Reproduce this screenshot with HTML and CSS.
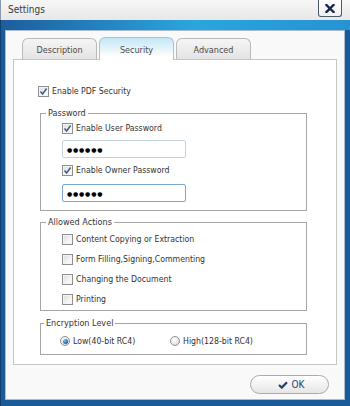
FILE: index.html
```html
<!DOCTYPE html>
<html>
<head>
  <title>Settings</title>
  <link rel="stylesheet" href="styles.css">
</head>
<body>
  <div class="window">
    <div class="titlebar">
      <span class="title">Settings</span>
      <button class="close">
        <svg width="10" height="9" viewBox="0 0 10 9"><path d="M1.5 1 L8.5 8 M8.5 1 L1.5 8" stroke="#15294a" stroke-width="2.4" stroke-linecap="square"/></svg>
      </button>
    </div>
    <div class="frame">
      <div class="dialog">
        <div class="tabs">
          <div class="tab">Description</div>
          <div class="tab active">Security</div>
          <div class="tab">Advanced</div>
        </div>
        <div class="panel">
          <label class="row top-row"><span class="box checked"><svg width="9" height="9" viewBox="0 0 9 9"><path d="M1.5 4.5 L3.6 7 L7.6 1.5" fill="none" stroke="#3d5a8c" stroke-width="1.5"/></svg></span>Enable PDF Security</label>

          <fieldset class="group password">
            <legend>Password</legend>
            <label class="row first-row"><span class="box checked"><svg width="9" height="9" viewBox="0 0 9 9"><path d="M1.5 4.5 L3.6 7 L7.6 1.5" fill="none" stroke="#3d5a8c" stroke-width="1.5"/></svg></span>Enable User Password</label>
            <div class="field">&#9679;&#9679;&#9679;&#9679;&#9679;&#9679;</div>
            <label class="row"><span class="box checked"><svg width="9" height="9" viewBox="0 0 9 9"><path d="M1.5 4.5 L3.6 7 L7.6 1.5" fill="none" stroke="#3d5a8c" stroke-width="1.5"/></svg></span>Enable Owner Password</label>
            <div class="field focused">&#9679;&#9679;&#9679;&#9679;&#9679;&#9679;</div>
          </fieldset>

          <fieldset class="group actions">
            <legend>Allowed Actions</legend>
            <label class="row"><span class="box"></span>Content Copying or Extraction</label>
            <label class="row"><span class="box"></span>Form Filling,Signing,Commenting</label>
            <label class="row"><span class="box"></span>Changing the Document</label>
            <label class="row"><span class="box"></span>Printing</label>
          </fieldset>

          <fieldset class="group level">
            <legend>Encryption Level</legend>
            <div class="radios">
              <label class="radio-item first"><span class="radio on"></span>Low(40-bit RC4)</label>
              <label class="radio-item"><span class="radio"></span>High(128-bit RC4)</label>
            </div>
          </fieldset>
        </div>
        <div class="footer">
          <button class="ok">
            <svg width="10" height="8" viewBox="0 0 10 8"><path d="M1 4 L3.8 6.6 L9 1.2" fill="none" stroke="#1f3f70" stroke-width="2.2"/></svg>
            OK
          </button>
        </div>
      </div>
    </div>
  </div>
</body>
</html>
```

FILE: styles.css
```css
body {
  margin: 0;
  font-family: 'DejaVu Sans Condensed', 'Liberation Sans', sans-serif;
  font-size: 8.7px;
  color: #333;
}
.window {
  width: 350px;
  height: 406px;
  display: flex;
  flex-direction: column;
  background-color: #1b5a98;
}
.titlebar {
  height: 20px;
  flex-shrink: 0;
  display: flex;
  align-items: flex-start;
  justify-content: space-between;
  background: linear-gradient(#f7f7f7, #e7e7e7);
  border-left: 1px solid #8a98a8;
  box-sizing: border-box;
}
.title {
  margin-left: 7px;
  margin-top: 4px;
  font-size: 10px;
  color: #3a3a3a;
}
.close {
  width: 24px;
  height: 17px;
  margin: 0 8px 0 0;
  padding: 0;
  background: linear-gradient(#ffffff, #f0f0f0);
  border: 1px solid #4c5a6a;
  border-top: none;
  border-radius: 0 0 3px 3px;
  display: flex;
  align-items: center;
  justify-content: center;
}
.frame {
  flex: 1;
  display: flex;
  padding: 10px 5px 6px 5px;
  background: linear-gradient(to right, #1d5d9e, #2aa6dd 55%, #2593d2) top / 100% 10px no-repeat, #1b5a98;
  border-left: 1px solid #123e6c;
}
.dialog {
  flex: 1;
  display: flex;
  flex-direction: column;
  background-color: #f9f9f9;
  border: 1px solid #a9bccd;
  padding: 0 7px;
  margin-left: -1px;
}
.tabs {
  display: flex;
  gap: 2px;
  margin-top: 7px;
  padding-left: 9px;
  height: 22px;
  margin-bottom: -1px;
}
.tab {
  width: 75px;
  box-sizing: border-box;
  display: flex;
  align-items: center;
  justify-content: center;
  padding-top: 1px;
  border: 1px solid #b9b9b9;
  border-bottom: none;
  border-radius: 6px 6px 0 0;
  background: linear-gradient(#f5f5f5, #e3e3e3);
  color: #4a4a4a;
  font-size: 9px;
}
.tab.active {
  height: 23px;
  margin-top: -1px;
  background: linear-gradient(#c3e6f5, #ffffff 85%);
  border-color: #a7c3d4;
  position: relative;
  z-index: 1;
}
.panel {
  height: 306px;
  box-sizing: border-box;
  background-color: #ffffff;
  border: 1px solid #c6c6c6;
  padding: 21px 0 0 26px;
}
.row {
  height: 20px;
  display: flex;
  align-items: center;
  gap: 3px;
}
.top-row {
  margin-left: -2px;
}
.first-row {
  margin-top: -1px;
}
.box {
  width: 11px;
  height: 11px;
  box-sizing: border-box;
  border: 1px solid #8e8f8f;
  background: linear-gradient(135deg, #dcdcdc, #f7f7f7 70%);
  box-shadow: inset 0 0 0 1px #f4f4f4;
  display: flex;
  align-items: center;
  justify-content: center;
}
.group {
  width: 267px;
  box-sizing: border-box;
  margin: 4px 0 0 0;
  padding: 0 0 0 21px;
  border: 1px solid #a6a6a6;
}
.group legend {
  margin-left: -16px;
  padding: 0 2px;
  line-height: 12px;
  font-size: 9px;
}
.password {
  margin-top: 6px;
  padding-bottom: 6px;
}
.field {
  width: 124px;
  height: 18px;
  box-sizing: border-box;
  margin: 2px 0 2px 0;
  border: 1px solid #c5d1dc;
  border-radius: 2px;
  padding-left: 4px;
  display: flex;
  align-items: center;
  font-family: 'DejaVu Sans', sans-serif;
  font-size: 6px;
  letter-spacing: 0.8px;
  color: #000;
}
.field.focused {
  margin-top: 4px;
  border-color: #7aa6d2;
}
.actions {
  margin-top: 5px;
  padding-top: 1px;
  padding-bottom: 1px;
}
.level {
  margin-top: 6px;
  padding: 2px 0 3px 19px;
}
.radios {
  display: flex;
  height: 20px;
}
.radio-item {
  display: flex;
  align-items: center;
  gap: 3px;
}
.radio-item.first {
  width: 110px;
}
.radio {
  width: 10px;
  height: 10px;
  box-sizing: border-box;
  border-radius: 50%;
  border: 1px solid #8e8f8f;
  background: radial-gradient(circle at 35% 35%, #ffffff, #d6d6d6);
  display: flex;
  align-items: center;
  justify-content: center;
}
.radio.on::after {
  content: "";
  width: 5px;
  height: 5px;
  border-radius: 50%;
  background: radial-gradient(circle at 35% 35%, #7fc4f0, #1a5fa8 70%);
}
.footer {
  display: flex;
  justify-content: flex-end;
  padding: 10px 8px 0 0;
}
.ok {
  width: 79px;
  height: 19px;
  border: 1px solid #ababab;
  border-radius: 10px;
  background: linear-gradient(#ffffff, #e6e6e6);
  display: flex;
  align-items: center;
  justify-content: center;
  gap: 4px;
  padding: 0 0 0 3px;
  font-family: 'DejaVu Sans Condensed', 'Liberation Sans', sans-serif;
  font-size: 10px;
  color: #1f3f70;
}
```
